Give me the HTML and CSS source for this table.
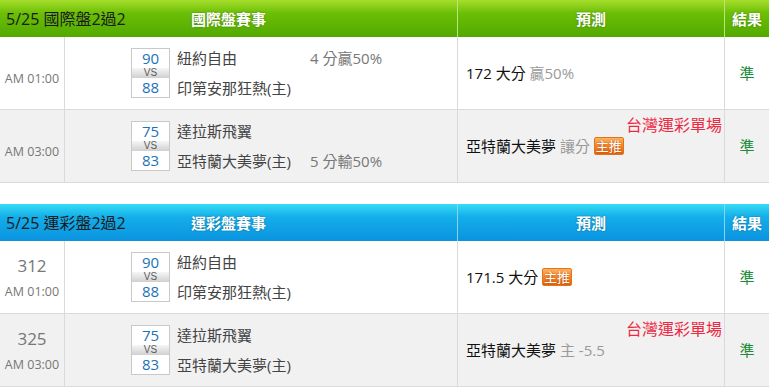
FILE: index.html
```html
<!DOCTYPE html>
<html lang="zh-Hant">
<head>
<meta charset="utf-8">
<title>2過2</title>
<link rel="stylesheet" href="styles.css">
</head>
<body>
<table class="board green">
  <colgroup><col class="c-time"><col class="c-match"><col class="c-pred"><col class="c-res"></colgroup>
  <thead>
    <tr>
      <th colspan="2"><div class="h-bar"><span class="h-date">5/25 國際盤2過2</span><span class="h-name">國際盤賽事</span><span></span></div></th>
      <th>預測</th>
      <th>結果</th>
    </tr>
  </thead>
  <tbody>
    <tr>
      <td class="time"><div class="time-in one"><span class="clock">AM 01:00</span></div></td>
      <td class="match"><div class="match-in">
        <div class="score"><span class="pt">90</span><span class="vs">VS</span><span class="pt">88</span></div>
        <div class="teams">
          <div class="team"><span class="name">紐約自由</span><span class="spread">4 分贏50%</span></div>
          <div class="team"><span class="name">印第安那狂熱(主)</span></div>
        </div>
      </div></td>
      <td class="pred">172 大分 <span class="muted">贏50%</span></td>
      <td class="res">準</td>
    </tr>
    <tr class="alt">
      <td class="time"><div class="time-in one"><span class="clock">AM 03:00</span></div></td>
      <td class="match"><div class="match-in">
        <div class="score"><span class="pt">75</span><span class="vs">VS</span><span class="pt">83</span></div>
        <div class="teams">
          <div class="team"><span class="name">達拉斯飛翼</span></div>
          <div class="team"><span class="name">亞特蘭大美夢(主)</span><span class="spread">5 分輸50%</span></div>
        </div>
      </div></td>
      <td class="pred"><span class="tag">台灣運彩單場</span>亞特蘭大美夢 <span class="muted">讓分</span> <span class="hot">主推</span></td>
      <td class="res">準</td>
    </tr>
  </tbody>
</table>

<table class="board blue">
  <colgroup><col class="c-time"><col class="c-match"><col class="c-pred"><col class="c-res"></colgroup>
  <thead>
    <tr>
      <th colspan="2"><div class="h-bar"><span class="h-date">5/25 運彩盤2過2</span><span class="h-name">運彩盤賽事</span><span></span></div></th>
      <th>預測</th>
      <th>結果</th>
    </tr>
  </thead>
  <tbody>
    <tr>
      <td class="time"><div class="time-in two"><span class="no">312</span><span class="clock">AM 01:00</span></div></td>
      <td class="match"><div class="match-in">
        <div class="score"><span class="pt">90</span><span class="vs">VS</span><span class="pt">88</span></div>
        <div class="teams">
          <div class="team"><span class="name">紐約自由</span></div>
          <div class="team"><span class="name">印第安那狂熱(主)</span></div>
        </div>
      </div></td>
      <td class="pred">171.5 大分 <span class="hot">主推</span></td>
      <td class="res">準</td>
    </tr>
    <tr class="alt">
      <td class="time"><div class="time-in two"><span class="no">325</span><span class="clock">AM 03:00</span></div></td>
      <td class="match"><div class="match-in">
        <div class="score"><span class="pt">75</span><span class="vs">VS</span><span class="pt">83</span></div>
        <div class="teams">
          <div class="team"><span class="name">達拉斯飛翼</span></div>
          <div class="team"><span class="name">亞特蘭大美夢(主)</span></div>
        </div>
      </div></td>
      <td class="pred"><span class="tag">台灣運彩單場</span>亞特蘭大美夢 <span class="muted">主 -5.5</span></td>
      <td class="res">準</td>
    </tr>
  </tbody>
</table>
</body>
</html>
```
FILE: styles.css
```css
html, body {
  margin: 0;
  padding: 0;
  background: #fff;
}

body {
  font-family: "Open Sans", "Noto Sans CJK TC", sans-serif;
  font-size: 15px;
  line-height: 20px;
  color: #111;
}

.board {
  width: 769px;
  table-layout: fixed;
  border-collapse: separate;
  border-spacing: 0;
}

.board + .board {
  margin-top: 21px;
}

.c-time { width: 65px; }
.c-match { width: 393px; }
.c-pred { width: 267px; }
.c-res { width: 44px; }

/* header */
.board thead tr {
  height: 37px;
}

.board th {
  height: 37px;
  box-sizing: border-box;
  padding: 0;
  font-size: 15px;
  font-weight: bold;
  color: #fff;
  text-align: center;
  line-height: 20px;
  text-shadow: 0 0 2px rgba(0, 0, 0, 0.35);
}

.green th {
  background: linear-gradient(#a6df2c 0%, #6cbf06 35%, #52a900 100%);
}

.blue th {
  background: linear-gradient(#36dcf4 0%, #14aeea 35%, #0a93df 100%);
}

.green th:not(:last-child) { border-right: 1px solid #b9e67a; }
.blue th:not(:last-child) { border-right: 1px solid #86d6f3; }

.h-bar {
  display: grid;
  grid-template-columns: 1fr auto 1fr;
  align-items: center;
}

.h-date {
  text-align: left;
  padding-left: 6px;
  font-size: 16px;
  font-weight: normal;
  color: #1b1b1b;
  text-shadow: none;
}

/* body */
.board tbody tr {
  height: 73px;
}

.board td {
  height: 73px;
  box-sizing: border-box;
  padding: 0;
  border-bottom: 1px solid #dadada;
  vertical-align: middle;
  background: #fff;
  overflow: hidden;
}

.board td:not(:last-child) {
  border-right: 1px solid #dadada;
}

.board tr.alt td {
  background: #f1f1f1;
}

.time {
  text-align: center;
  color: #777;
  font-size: 12.5px;
}

.time-in {
  display: flex;
  flex-direction: column;
  align-items: center;
}

.time-in.one {
  margin-top: 11px;
}

.time-in.two {
  margin-top: 4px;
}

.clock {
  line-height: 26px;
}

.no {
  font-size: 17px;
  line-height: 26px;
}

.match-in {
  display: flex;
  align-items: center;
  gap: 7px;
  padding-left: 66px;
}

.score {
  width: 39px;
  box-sizing: border-box;
  border: 1px solid #c9c9c9;
  display: flex;
  flex-direction: column;
  text-align: center;
  background: #fff;
}

.pt {
  height: 19px;
  line-height: 19px;
  font-size: 15px;
  color: #1b72b8;
}

.vs {
  height: 10px;
  line-height: 10px;
  font-family: "Liberation Sans", sans-serif;
  font-size: 10px;
  color: #5a5a5a;
  background: linear-gradient(#f6f6f6, #d0d0d0);
}

.teams {
  height: 50px;
  display: flex;
  flex-direction: column;
  justify-content: space-between;
}

.team {
  display: flex;
  line-height: 20px;
  font-size: 15px;
  color: #444;
}

.name {
  width: 133px;
}

.spread {
  color: #777;
}

.board td.pred {
  position: relative;
  padding-left: 8px;
  font-size: 15px;
  color: #111;
  line-height: 20px;
}

.muted {
  color: #9a9a9a;
}

.tag {
  position: absolute;
  top: 5px;
  right: 2px;
  font-size: 16px;
  line-height: 20px;
  color: #ec2a44;
}

.hot {
  display: inline-block;
  box-sizing: border-box;
  width: 30px;
  height: 18px;
  line-height: 16px;
  font-size: 13px;
  text-align: center;
  color: #fff;
  border: 1px solid #e0731c;
  border-radius: 2px;
  background: linear-gradient(#ffb35e 0%, #f5862c 50%, #e4650d 100%);
  text-shadow: 0 0 2px rgba(120, 40, 0, 0.6);
  vertical-align: 1px;
}

.res {
  text-align: center;
  font-size: 15px;
  color: #1c8b3c;
}
```
